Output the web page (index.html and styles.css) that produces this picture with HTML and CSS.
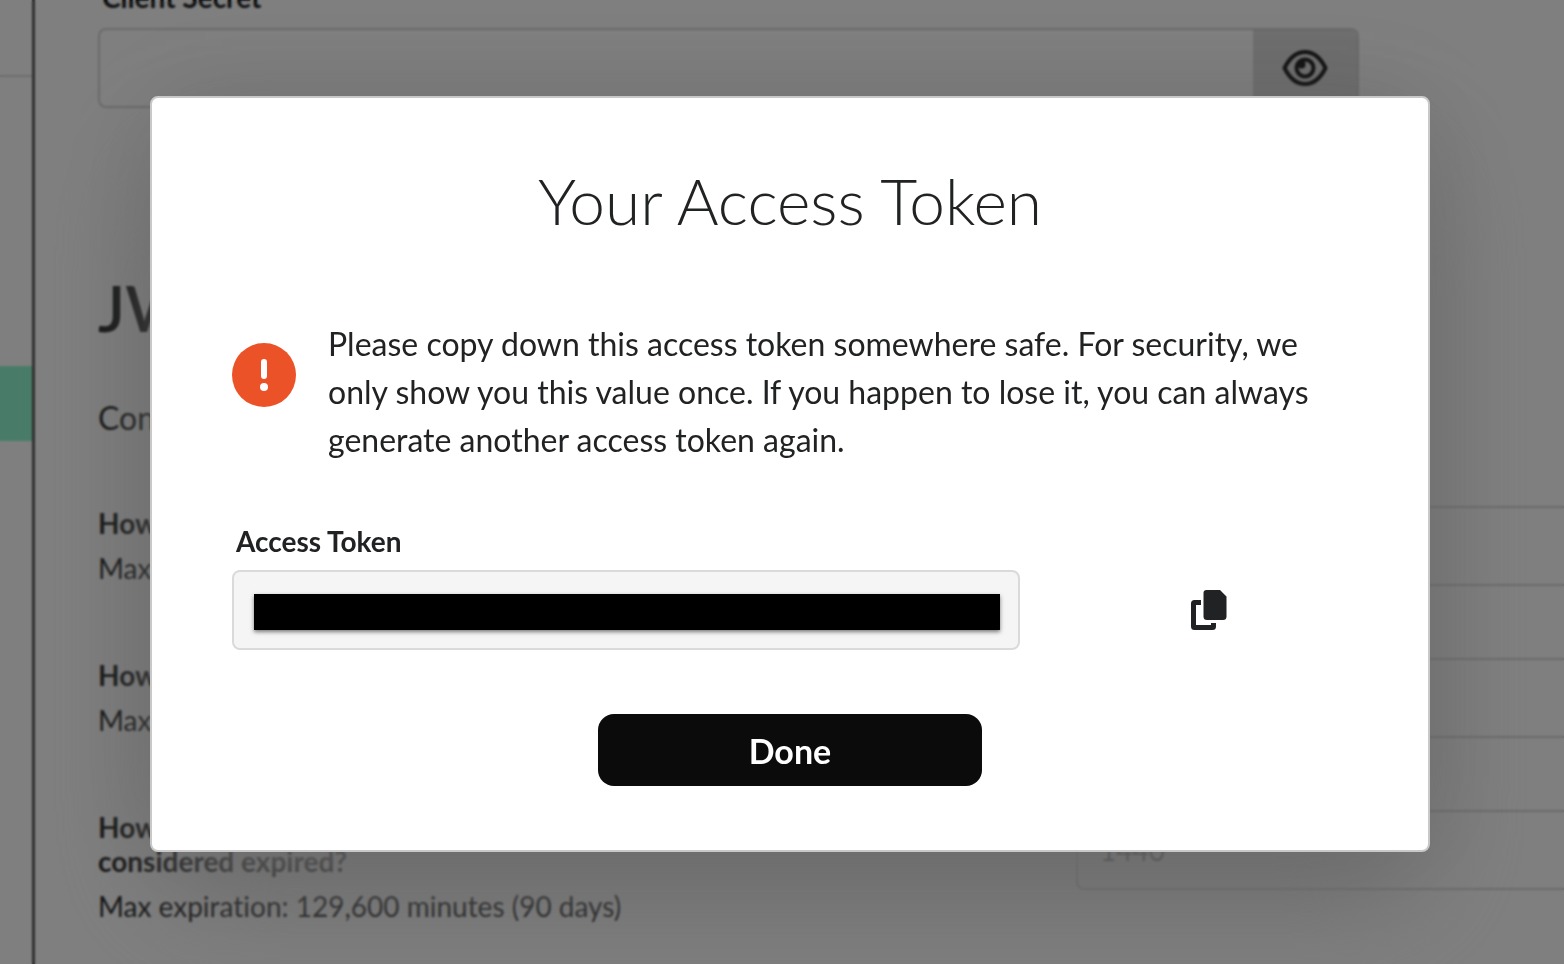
FILE: index.html
```html
<!DOCTYPE html>
<html lang="en">
<head>
<meta charset="utf-8">
<meta name="viewport" content="width=device-width, initial-scale=1">
<title>Your Access Token</title>
<link rel="stylesheet" href="styles.css">
</head>
<body>
<div class="page">
  <nav class="sidebar">
    <div class="sidebar-head"></div>
    <div class="sidebar-active"></div>
  </nav>
  <main class="content">
    <label class="field-label secret-label" for="secret">Client Secret</label>
    <div class="secret">
      <input class="secret-input" id="secret" type="text">
      <button class="secret-toggle" type="button" aria-label="Show client secret">
        <svg width="46" height="38" viewBox="0 0 46 38" fill="none" stroke="currentColor" stroke-width="4" stroke-linejoin="round">
          <path d="M2.5 19C8 8 15 3 23 3s15 5 20.500 16C38 30 31 35 23 35S8 30 2.500 19z"/>
          <circle cx="23" cy="19" r="8.500"/>
          <path d="M15 17c0-4 3-7 7-7 2 5-2 9-7 7z" fill="currentColor" stroke="none"/>
          <circle cx="19.500" cy="15.500" r="4" fill="currentColor" stroke="none"/>
        </svg>
      </button>
    </div>
    <h2 class="section-title">JWT</h2>
    <p class="section-text">Configure</p>
    <div class="rows">
      <div class="row">
        <div class="row-text"><label class="field-label" for="r1">How long</label><span class="hint">Max expiration:</span></div>
        <input class="row-input" id="r1" type="text">
      </div>
      <div class="row">
        <div class="row-text"><label class="field-label" for="r2">How long</label><span class="hint">Max expiration:</span></div>
        <input class="row-input" id="r2" type="text">
      </div>
      <div class="row">
        <div class="row-text"><label class="field-label" for="r3">How long<br>considered expired?</label><span class="hint">Max expiration: 129,600 minutes (90 days)</span></div>
        <input class="row-input" id="r3" type="text" placeholder="1440">
      </div>
    </div>
  </main>
</div>

<div class="overlay">
  <section class="modal" role="dialog" aria-modal="true" aria-labelledby="modal-title">
    <h1 class="modal-title" id="modal-title">Your Access Token</h1>
    <div class="notice">
      <svg class="notice-icon" width="64" height="64" viewBox="0 0 64 64">
        <circle cx="32" cy="32" r="32" fill="#ec5228"/>
        <rect x="29" y="16" width="6" height="20" rx="3" fill="#fff"/>
        <circle cx="32" cy="44" r="4" fill="#fff"/>
      </svg>
      <p class="notice-text">Please copy down this access token somewhere safe. For security, we only show you this value once. If you happen to lose it, you can always generate another access token again.</p>
    </div>
    <label class="token-label" for="token">Access Token</label>
    <div class="token-row">
      <div class="token-field">
        <input class="token-input" id="token" type="text" readonly>
        <span class="redaction"></span>
      </div>
      <button class="copy" type="button" aria-label="Copy access token">
        <svg width="36" height="42" viewBox="0 0 36 42">
          <path d="M10 13.500H3.500A1 1 0 0 0 2.500 14.500V37.500a1 1 0 0 0 1 1H21.500a1 1 0 0 0 1-1V34" fill="none" stroke="#212223" stroke-width="5"/>
          <path d="M15.500 1H29L35.500 7.500v20a3.500 3.500 0 0 1-3.500 3.500H16a3.500 3.500 0 0 1-3.500-3.500V4a3 3 0 0 1 3-3z" fill="#212223"/>
        </svg>
      </button>
    </div>
    <button class="done" type="button">Done</button>
  </section>
</div>
</body>
</html>
```
FILE: styles.css
```css
* {
  box-sizing: border-box;
}

body {
  margin: 0;
  height: 100vh;
  overflow: hidden;
  background: #fff;
  color: #212223;
  font-family: Lato, "Open Sans", sans-serif;
  font-variant-ligatures: none;
}

h1, h2, p {
  margin: 0;
}

button, input {
  font-family: inherit;
}

.page {
  display: flex;
  height: 100vh;
  overflow: hidden;
}

.sidebar {
  flex: none;
  width: 35px;
  border-right: 3px solid #606060;
}

.sidebar-head {
  height: 77px;
  border-bottom: 2px solid #dcdcdc;
}

.sidebar-active {
  height: 75px;
  margin-top: 289px;
  background: #90f8d0;
}

.content {
  flex: 1;
  min-width: 0;
  margin-top: -20px;
  padding-left: 63px;
}

.field-label {
  display: block;
  font-size: 28px;
  font-weight: 700;
  line-height: 34px;
}

.secret-label {
  margin: 0 0 14px 4px;
}

.secret {
  display: flex;
  height: 80px;
  margin-right: 205px;
  border: 2px solid #d4d4d4;
  border-radius: 8px;
  overflow: hidden;
}

.secret-input {
  flex: 1;
  min-width: 0;
  border: 0;
  background: transparent;
}

.secret-toggle {
  display: flex;
  align-items: center;
  justify-content: center;
  width: 104px;
  padding: 0;
  border: 0;
  background: #dcdcdc;
  color: #242526;
}

.section-title {
  margin-top: 162px;
  font-size: 64px;
  font-weight: 600;
  line-height: 76px;
}

.section-text {
  margin-top: 48px;
  font-size: 32px;
  line-height: 48px;
}

.rows {
  display: flex;
  flex-direction: column;
  gap: 72px;
  margin-top: 64px;
}

.row {
  display: flex;
  height: 80px;
}

.row-text {
  flex: none;
  width: 978px;
}

.hint {
  display: block;
  margin-top: 11px;
  font-size: 28px;
  line-height: 34px;
}

.row-input {
  flex: none;
  width: 600px;
  padding: 0 22px;
  border: 2px solid #d4d4d4;
  border-radius: 8px;
  background: transparent;
  font-size: 28px;
}

.row-input::placeholder {
  color: #606060;
}

.overlay {
  position: fixed;
  inset: 0;
  display: flex;
  align-items: center;
  justify-content: center;
  padding: 0 0 16px 16px;
  background: rgba(0, 0, 0, 0.5);
  backdrop-filter: blur(1px);
}

.modal {
  width: 1280px;
  max-width: 100%;
  padding: 65px 80px 64px;
  border: 2px solid #c8c8c8;
  border-radius: 8px;
  background: #fff;
  box-shadow: 0 56px 112px -16px #6b6b6b, 0 0 112px rgba(0, 0, 0, 0.12);
}

.modal-title {
  font-size: 64px;
  font-weight: 300;
  line-height: 76px;
  text-align: center;
}

.notice {
  display: flex;
  gap: 32px;
  margin-top: 81px;
}

.notice-icon {
  flex: none;
  margin-top: 23px;
}

.notice-text {
  flex: 1;
  font-size: 32px;
  line-height: 48px;
}

.token-label {
  display: block;
  margin: 60px 0 12px 4px;
  font-size: 28px;
  font-weight: 700;
  line-height: 34px;
}

.token-row {
  display: flex;
  align-items: center;
}

.token-field {
  position: relative;
  width: 788px;
}

.token-input {
  display: block;
  width: 100%;
  height: 80px;
  border: 2px solid #dadada;
  border-radius: 8px;
  background: #f5f5f5;
}

.redaction {
  position: absolute;
  inset: 24px 20px 20px 22px;
  background: #000;
  box-shadow: 0 2px 4px rgba(0, 0, 0, 0.5);
}

.copy {
  display: flex;
  justify-content: center;
  flex: 1;
  padding: 0 0 0 50px;
  border: 0;
  background: none;
}

.done {
  display: block;
  width: 384px;
  height: 72px;
  margin: 64px auto 0;
  border: 0;
  border-radius: 16px;
  background: #0b0b0b;
  color: #fff;
  font-size: 34px;
  font-weight: 700;
}
```
